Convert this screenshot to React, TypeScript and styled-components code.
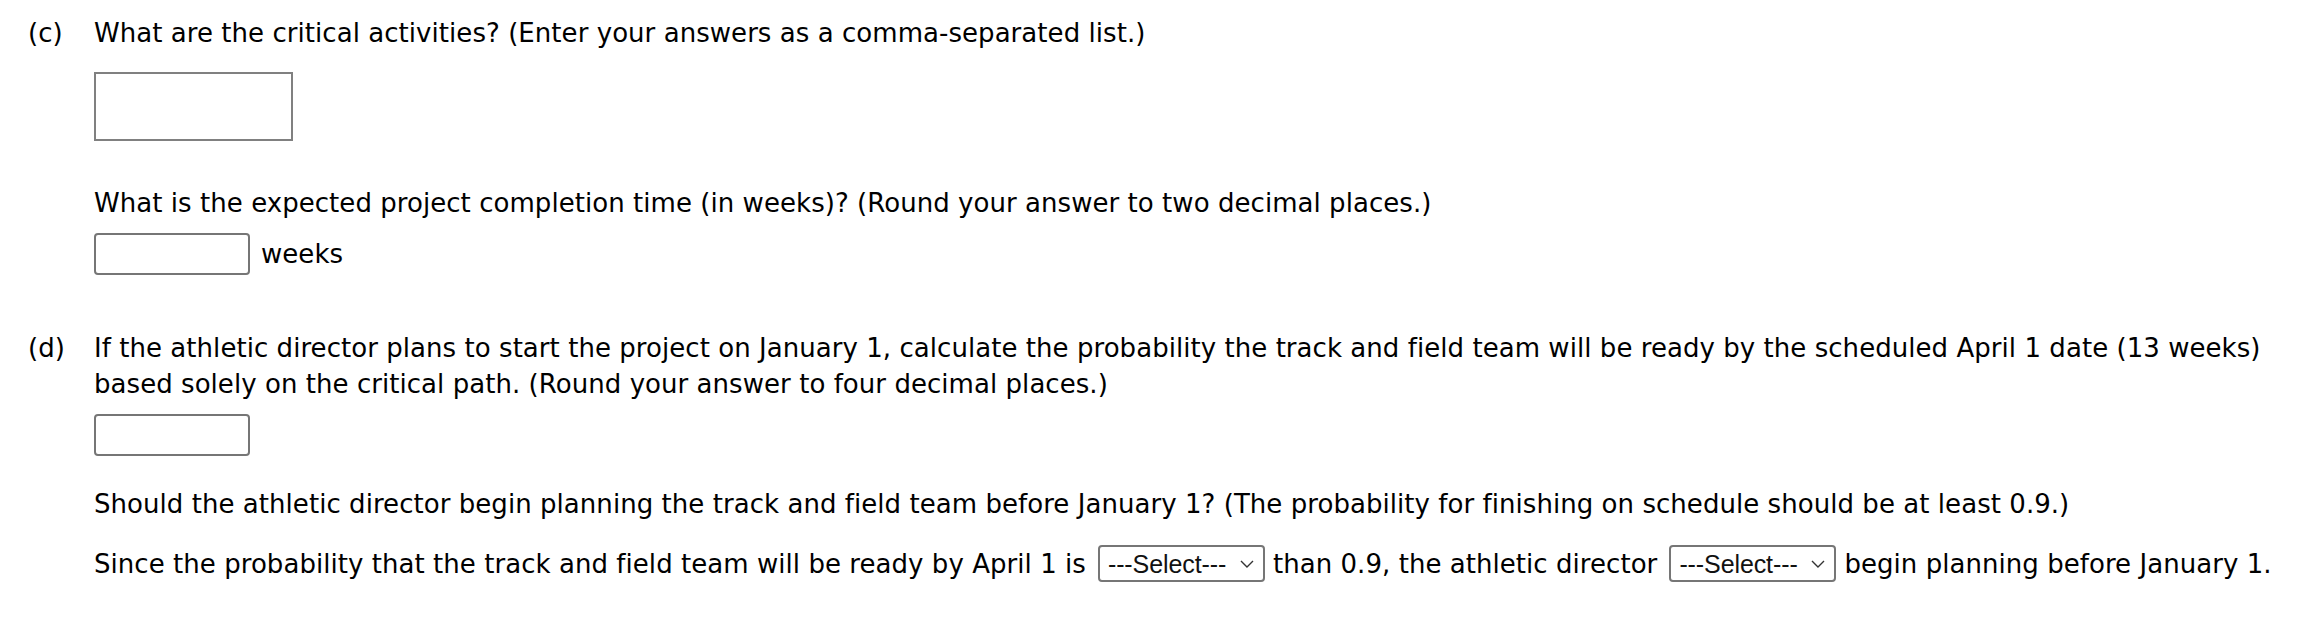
import React from 'react';
import styled, { createGlobalStyle } from 'styled-components';

const GlobalStyle = createGlobalStyle`
  body {
    margin: 0;
    background: #fff;
  }
`;

const Page = styled.div`
  padding: 15px 20px 0 28px;
  font-family: "DejaVu Sans", Verdana, sans-serif;
  font-size: 26px;
  letter-spacing: 0.05px;
  line-height: 36px;
  color: #000;
`;

const Part = styled.section<{ $top?: number }>`
  display: grid;
  grid-template-columns: 66px 1fr;
  margin-top: ${p => p.$top ?? 0}px;
`;

const Label = styled.div``;

const Body = styled.div`
  display: flex;
  flex-direction: column;
  align-items: flex-start;
`;

const Prompt = styled.p<{ $top?: number }>`
  margin: ${p => p.$top ?? 0}px 0 0;
`;

const WideBox = styled.input`
  box-sizing: border-box;
  width: 199px;
  height: 69px;
  margin: 21px 0 0;
  border: 2px solid #808080;
  border-radius: 0;
  background: #fff;
`;

const SmallBox = styled.input<{ $top?: number }>`
  box-sizing: border-box;
  width: 156px;
  height: 42px;
  margin: ${p => p.$top ?? 0}px 0 0;
  border: 2px solid #767676;
  border-radius: 4px;
  background: #fff;
`;

const UnitRow = styled.div`
  display: flex;
  align-items: center;
  gap: 11px;
  margin-top: 12px;
`;

const ChoiceRow = styled.div`
  display: flex;
  align-items: center;
  white-space: nowrap;
  margin-top: 23px;
`;

const SelectWrap = styled.span`
  position: relative;
  display: inline-flex;
  margin: 0 8px 0 12px;
`;

const Select = styled.select`
  appearance: none;
  box-sizing: border-box;
  width: 167px;
  height: 37px;
  padding: 0 0 0 8px;
  border: 2px solid #767676;
  border-radius: 4px;
  background: #fff;
  font-family: "Liberation Sans", Arial, sans-serif;
  font-size: 25px;
  letter-spacing: -0.1px;
  color: #111;
`;

const Chevron = styled.svg`
  position: absolute;
  right: 11px;
  top: 15px;
  pointer-events: none;
`;

const Dropdown = () => (
  <SelectWrap>
    <Select defaultValue="">
      <option value="">---Select---</option>
      <option value="a">greater</option>
      <option value="b">less</option>
    </Select>
    <Chevron width="14" height="8" viewBox="0 0 14 8">
      <polyline points="1,1 7,7 13,1" fill="none" stroke="#333" strokeWidth="1.4" />
    </Chevron>
  </SelectWrap>
);

export default function App() {
  return (
    <>
      <GlobalStyle />
      <Page>
        <Part>
          <Label>(c)</Label>
          <Body>
            <Prompt>What are the critical activities? (Enter your answers as a comma-separated list.)</Prompt>
            <WideBox type="text" />
            <Prompt $top={44}>What is the expected project completion time (in weeks)? (Round your answer to two decimal places.)</Prompt>
            <UnitRow>
              <SmallBox type="text" />
              <span>weeks</span>
            </UnitRow>
          </Body>
        </Part>
        <Part $top={55}>
          <Label>(d)</Label>
          <Body>
            <Prompt>
              If the athletic director plans to start the project on January 1, calculate the probability the track and field team will be ready by the scheduled April 1 date (13 weeks) based solely on the critical path. (Round your answer to four decimal places.)
            </Prompt>
            <SmallBox type="text" $top={12} />
            <Prompt $top={30}>
              Should the athletic director begin planning the track and field team before January 1? (The probability for finishing on schedule should be at least 0.9.)
            </Prompt>
            <ChoiceRow>
              <span>Since the probability that the track and field team will be ready by April 1 is</span>
              <Dropdown />
              <span>than 0.9, the athletic director</span>
              <Dropdown />
              <span>begin planning before January 1.</span>
            </ChoiceRow>
          </Body>
        </Part>
      </Page>
    </>
  );
}
